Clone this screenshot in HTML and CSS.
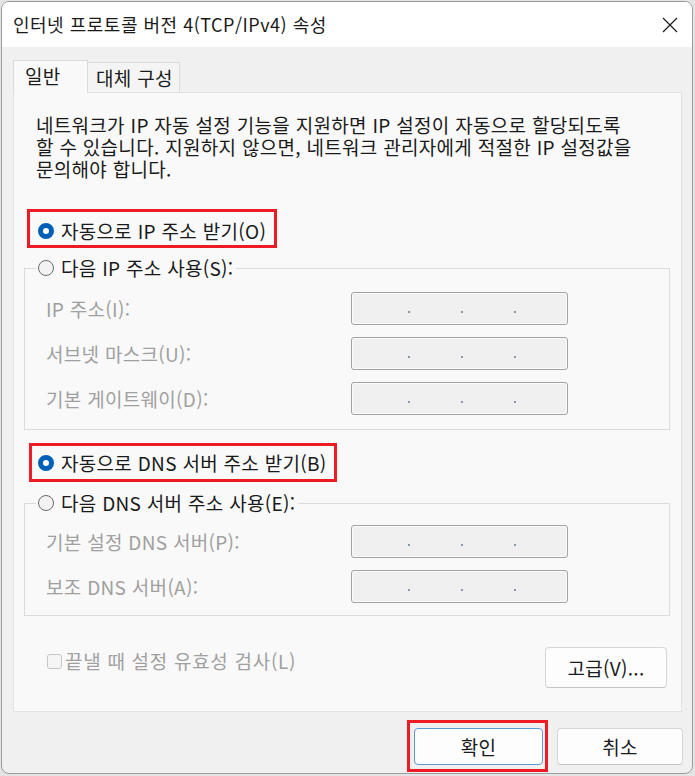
FILE: index.html
```html
<!DOCTYPE html>
<html lang="ko">
<head>
<meta charset="utf-8">
<title>인터넷 프로토콜 버전 4(TCP/IPv4) 속성</title>
<link rel="stylesheet" href="styles.css">
</head>
<body>
<div class="window">
  <div class="titlebar">
    <span class="title">인터넷 프로토콜 버전 4(TCP/IPv4) 속성</span>
    <span class="close">
      <svg width="16" height="16" viewBox="0 0 16 16"><path d="M1 1 L15 15 M15 1 L1 15" stroke="#1a1a1a" stroke-width="1.2" fill="none"/></svg>
    </span>
  </div>
  <div class="content">
    <div class="tabs">
      <div class="tab active">일반</div>
      <div class="tab alt">대체 구성</div>
    </div>
    <div class="panel">
      <p class="desc"><span class="line">네트워크가 IP 자동 설정 기능을 지원하면 IP 설정이 자동으로 할당되도록</span><span class="line">할 수 있습니다. 지원하지 않으면, 네트워크 관리자에게 적절한 IP 설정값을</span><span class="line">문의해야 합니다.</span></p>

      <div class="opt opt-ip hl hl-ip"><span class="radio on"></span><span>자동으로 IP 주소 받기(O)</span></div>

      <fieldset class="group group-ip">
        <legend class="opt"><span class="radio"></span><span>다음 IP 주소 사용(S):</span></legend>
        <div class="row first"><span class="lbl">IP 주소(I):</span><span class="ipbox"><i></i><i></i><i></i></span></div>
        <div class="row"><span class="lbl">서브넷 마스크(U):</span><span class="ipbox"><i></i><i></i><i></i></span></div>
        <div class="row"><span class="lbl">기본 게이트웨이(D):</span><span class="ipbox"><i></i><i></i><i></i></span></div>
      </fieldset>

      <div class="opt opt-dns hl hl-dns"><span class="radio on"></span><span>자동으로 DNS 서버 주소 받기(B)</span></div>

      <fieldset class="group group-dns">
        <legend class="opt"><span class="radio"></span><span>다음 DNS 서버 주소 사용(E):</span></legend>
        <div class="row first"><span class="lbl">기본 설정 DNS 서버(P):</span><span class="ipbox"><i></i><i></i><i></i></span></div>
        <div class="row"><span class="lbl">보조 DNS 서버(A):</span><span class="ipbox"><i></i><i></i><i></i></span></div>
      </fieldset>

      <div class="bottomrow">
        <label class="check"><span class="box"></span><span>끝낼 때 설정 유효성 검사(L)</span></label>
        <button class="btn adv">고급(V)...</button>
      </div>
    </div>
    <div class="actions">
      <button class="btn ok hl hl-ok">확인</button>
      <button class="btn cancel">취소</button>
    </div>
  </div>
</div>
</body>
</html>
```

FILE: styles.css
```css
html, body {
  margin: 0;
  padding: 0;
  background: #e4e4e4;
}
body {
  font-family: "Noto Sans CJK KR", "Noto Sans", sans-serif;
  font-size: 19px;
  letter-spacing: 0.3px;
  color: #1a1a1a;
}
.window {
  margin: 1px 2px 0 1px;
  height: 773px;
  box-sizing: border-box;
  border: 1px solid #9c9c9c;
  border-radius: 8px;
  overflow: hidden;
  background: #f0f0f0;
  display: flex;
  flex-direction: column;
}
.titlebar {
  height: 45px;
  background: #ffffff;
  display: flex;
  align-items: center;
  justify-content: space-between;
  padding-left: 11px;
  flex-shrink: 0;
}
.title {
  font-size: 18px;
  letter-spacing: 0.5px;
  line-height: 22px;
  margin-top: -2px;
}
.close {
  width: 44px;
  height: 45px;
  display: flex;
  align-items: center;
  justify-content: center;
}
.content {
  padding: 13px 0 0 11px;
}
.tabs {
  display: flex;
  align-items: flex-end;
  height: 32px;
}
.tab {
  box-sizing: border-box;
  height: 30px;
  border: 1px solid #dadada;
  border-bottom: none;
  background: #f4f4f4;
  display: flex;
  align-items: center;
  line-height: 22px;
  white-space: nowrap;
}
.tab.active {
  width: 75px;
  height: 33px;
  padding: 0 0 2px 11px;
  background: #f9f9f9;
  margin-bottom: -1px;
  position: relative;
  z-index: 1;
}
.tab.alt {
  width: 92px;
  border-left: none;
  padding-left: 8px;
}
.panel {
  box-sizing: border-box;
  width: 669px;
  height: 620px;
  border: 1px solid #e2e2e2;
  background: #f9f9f9;
  padding: 21px 0 0 0;
}
.desc {
  margin: 0 0 0 22px;
  white-space: nowrap;
}
.line {
  display: block;
  height: 22px;
  line-height: 22px;
}
.opt {
  display: flex;
  align-items: center;
  line-height: 22px;
  white-space: nowrap;
}
.opt-ip {
  margin: 40px 0 0 24px;
}
.opt-dns {
  margin: 22px 0 0 24px;
}
.radio {
  box-sizing: border-box;
  width: 16px;
  height: 16px;
  border-radius: 50%;
  border: 1px solid #6b6b6b;
  background: #f3f3f3;
  margin-right: 7px;
  flex-shrink: 0;
}
.radio.on {
  border: 5px solid #005fb8;
  background: #ffffff;
}
.hl {
  position: relative;
  width: max-content;
}
.hl::after {
  content: "";
  position: absolute;
  border: 3px solid #ed1c24;
  pointer-events: none;
}
.hl-ip::after {
  left: -11px; top: -11px; right: -11px; bottom: -6px;
}
.hl-dns::after {
  left: -9px; top: -9px; right: -10px; bottom: -8px;
}
.hl-ok::after {
  left: -8px; top: -9px; right: -6px; bottom: -8px;
}
.group {
  box-sizing: border-box;
  margin: 15px 0 0 10px;
  width: 646px;
  border: 1px solid #dcdcdc;
  padding: 0 0 14px 11px;
  min-inline-size: 0;
}
.group-dns {
  margin-top: 18px;
  padding-bottom: 12px;
}
.group legend {
  padding: 0 3px 0 2px;
  margin: 0;
}
.row {
  display: flex;
  align-items: center;
  height: 33px;
  margin: 12px 0 0 10px;
}
.group-ip .row.first {
  margin-top: 13px;
}
.group-dns .row.first {
  margin-top: 11px;
}
.lbl {
  width: 305px;
  color: #a0a0a0;
  line-height: 22px;
  white-space: nowrap;
}
.ipbox {
  box-sizing: border-box;
  width: 217px;
  height: 33px;
  border: 1px solid #a2a2a2;
  border-radius: 3px;
  background: #f0f0f0;
  box-shadow: inset 0 0 0 1px #fbfbfb;
  display: flex;
  align-items: flex-end;
  padding: 0 0 11px 56px;
}
.ipbox i {
  display: block;
  width: 2px;
  height: 2px;
  background: #8c98a8;
  margin-right: 51px;
}
.bottomrow {
  display: flex;
  justify-content: space-between;
  align-items: flex-start;
  margin: 31px 14px 0 33px;
}
.check {
  display: flex;
  align-items: center;
  line-height: 22px;
  color: #a0a0a0;
  letter-spacing: 0.7px;
  margin-top: 3px;
  white-space: nowrap;
}
.box {
  box-sizing: border-box;
  width: 15px;
  height: 15px;
  border: 1px solid #c6c6c6;
  border-radius: 3px;
  background: #f5f5f5;
  margin-right: 3px;
}
.btn {
  font-family: "Noto Sans CJK KR", "Noto Sans", sans-serif;
  font-size: 19px;
  letter-spacing: 0.3px;
  color: #1a1a1a;
  background: #fdfdfd;
  border: 1px solid #d6d6d6;
  border-bottom-color: #c4c4c4;
  border-radius: 4px;
  padding: 0;
  line-height: 22px;
}
.adv {
  width: 122px;
  height: 41px;
}
.actions {
  display: flex;
  justify-content: flex-end;
  gap: 14px;
  margin: 16px 9px 0 0;
}
.ok {
  width: 129px;
  height: 37px;
  border: 1px solid #5a9ad6;
}
.cancel {
  width: 126px;
  height: 37px;
}
```
